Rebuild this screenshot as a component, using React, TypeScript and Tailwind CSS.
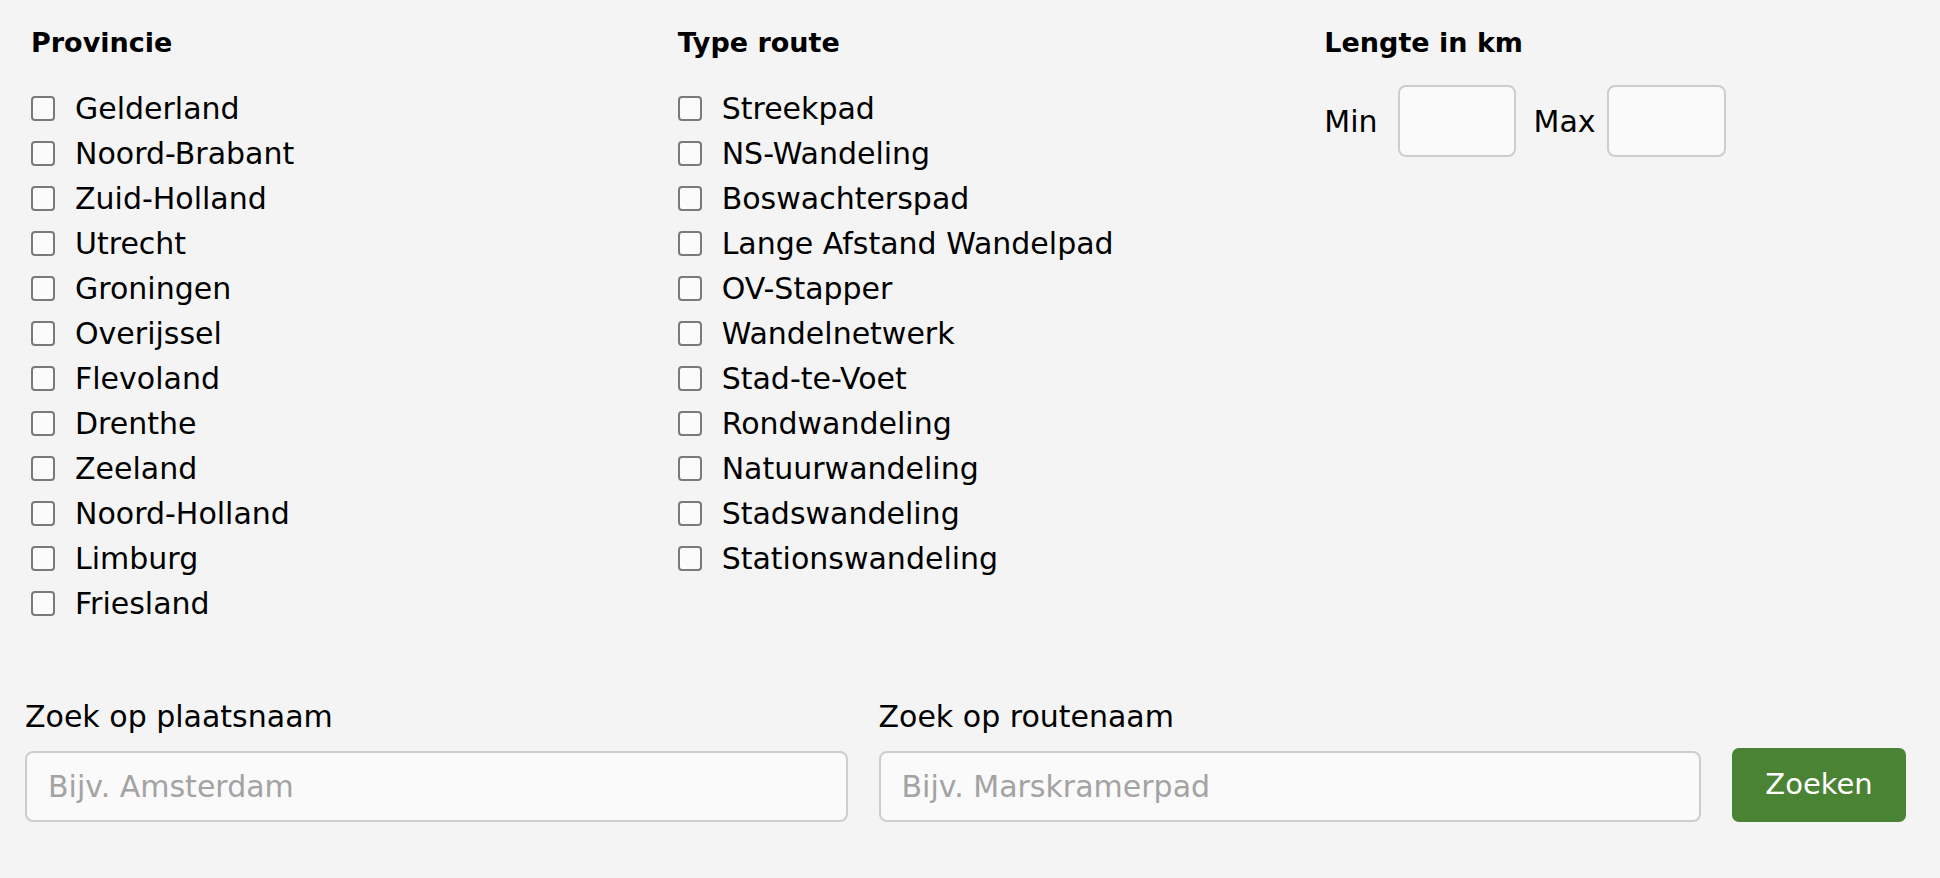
import React from 'react';

const PROVINCIES = [
  'Gelderland',
  'Noord-Brabant',
  'Zuid-Holland',
  'Utrecht',
  'Groningen',
  'Overijssel',
  'Flevoland',
  'Drenthe',
  'Zeeland',
  'Noord-Holland',
  'Limburg',
  'Friesland',
];

const TYPES = [
  'Streekpad',
  'NS-Wandeling',
  'Boswachterspad',
  'Lange Afstand Wandelpad',
  'OV-Stapper',
  'Wandelnetwerk',
  'Stad-te-Voet',
  'Rondwandeling',
  'Natuurwandeling',
  'Stadswandeling',
  'Stationswandeling',
];

const CheckList: React.FC<{ items: string[] }> = ({ items }) => (
  <ul className="mt-[28px]">
    {items.map((item) => (
      <li key={item}>
        <label className="flex items-center h-[45px] cursor-pointer">
          <input
            type="checkbox"
            className="appearance-none w-[24px] h-[25px] shrink-0 rounded-[4px] border-[2px] border-[#7a7a7a] bg-[#fbfbfb]"
          />
          <span className="ml-[20px]">{item}</span>
        </label>
      </li>
    ))}
  </ul>
);

const App: React.FC = () => {
  return (
    <div className="min-h-[878px] w-full bg-[#f4f4f4] text-black text-[30px] font-['DejaVu_Sans',sans-serif] overflow-hidden">
      {/* Filters */}
      <div className="grid grid-cols-3 pt-[28px]">
        <div className="pl-[31px]">
          <h3 className="text-[27px] font-bold leading-[30px]">Provincie</h3>
          <CheckList items={PROVINCIES} />
        </div>
        <div className="pl-[31px]">
          <h3 className="text-[27px] font-bold leading-[30px]">Type route</h3>
          <CheckList items={TYPES} />
        </div>
        <div className="pl-[31px]">
          <h3 className="text-[27px] font-bold leading-[30px]">Lengte in km</h3>
          <div className="mt-[27px] flex items-center">
            <span>Min</span>
            <input
              type="text"
              className="ml-[20px] w-[118px] h-[72px] rounded-[8px] border-[2px] border-[#cdcdcd] bg-[#fafafa] px-[10px] outline-none"
            />
            <span className="ml-[18px]">Max</span>
            <input
              type="text"
              className="ml-[11px] w-[119px] h-[72px] rounded-[8px] border-[2px] border-[#cdcdcd] bg-[#fafafa] px-[10px] outline-none"
            />
          </div>
        </div>
      </div>

      {/* Search */}
      <div className="mt-[74px] flex items-end gap-[31px] pl-[25px] pr-[34px]">
        <div className="flex-1 flex flex-col">
          <label className="leading-[34px]">Zoek op plaatsnaam</label>
          <input
            type="text"
            placeholder="Bijv. Amsterdam"
            className="mt-[17px] h-[71px] rounded-[8px] border-[2px] border-[#cdcdcd] bg-[#fafafa] px-[21px] outline-none placeholder:text-[#a3a3a3]"
          />
        </div>
        <div className="flex-1 flex flex-col">
          <label className="leading-[34px]">Zoek op routenaam</label>
          <input
            type="text"
            placeholder="Bijv. Marskramerpad"
            className="mt-[17px] h-[71px] rounded-[8px] border-[2px] border-[#cdcdcd] bg-[#fafafa] px-[21px] outline-none placeholder:text-[#a3a3a3]"
          />
        </div>
        <button
          type="button"
          className="w-[174px] h-[74px] rounded-[7px] bg-[#4b8334] text-white text-[29px]"
        >
          Zoeken
        </button>
      </div>
    </div>
  );
};

export default App;
